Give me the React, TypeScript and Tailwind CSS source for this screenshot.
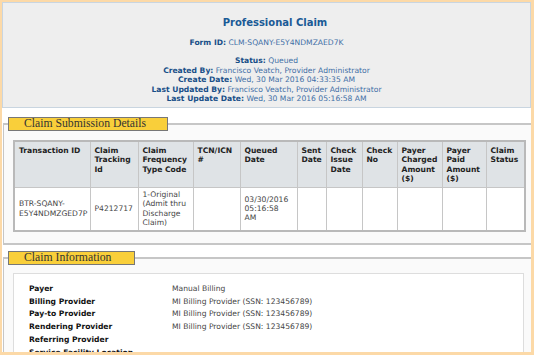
import React from 'react';

const headerLines: [string, string][] = [
  ['Status:', 'Queued'],
  ['Created By:', 'Francisco Veatch, Provider Administrator'],
  ['Create Date:', 'Wed, 30 Mar 2016 04:33:35 AM'],
  ['Last Updated By:', 'Francisco Veatch, Provider Administrator'],
  ['Last Update Date:', 'Wed, 30 Mar 2016 05:16:58 AM'],
];

const columns: { w: string; label: React.ReactNode }[] = [
  { w: 'w-[76px]', label: 'Transaction ID' },
  { w: 'w-[48px]', label: <>Claim<br />Tracking<br />Id</> },
  { w: 'w-[55px]', label: <>Claim<br />Frequency<br />Type Code</> },
  { w: 'w-[47px]', label: <>TCN/ICN<br />#</> },
  { w: 'w-[57px]', label: <>Queued<br />Date</> },
  { w: 'w-[29px]', label: <>Sent<br />Date</> },
  { w: 'w-[36px]', label: <>Check<br />Issue<br />Date</> },
  { w: 'w-[35px]', label: <>Check<br />No</> },
  { w: 'w-[45px]', label: <>Payer<br />Charged<br />Amount<br />($)</> },
  { w: 'w-[44px]', label: <>Payer<br />Paid<br />Amount<br />($)</> },
  { w: 'w-[39px]', label: <>Claim<br />Status</> },
];

const rowCells: React.ReactNode[] = [
  <>BTR-SQANY-<br />E5Y4NDMZGED7P</>,
  'P4212717',
  <>1-Original<br />(Admit thru<br />Discharge<br />Claim)</>,
  '',
  <>03/30/2016<br />05:16:58<br />AM</>,
  '',
  '',
  '',
  '',
  '',
  '',
];

const claimInfo: [string, string][] = [
  ['Payer', 'Manual Billing'],
  ['Billing Provider', 'MI Billing Provider (SSN: 123456789)'],
  ['Pay-to Provider', 'MI Billing Provider (SSN: 123456789)'],
  ['Rendering Provider', 'MI Billing Provider (SSN: 123456789)'],
  ['Referring Provider', ''],
  ['Service Facility Location', ''],
];

const Legend: React.FC<{ width: string; children: React.ReactNode }> = ({ width, children }) => (
  <legend
    className={`${width} ml-[4px] h-[14px] bg-[#f9cf3a] border border-[#777777] pl-[15px] font-['Liberation_Serif',serif] text-[11.7px] leading-[12px] text-[#333333] whitespace-nowrap`}
  >
    {children}
  </legend>
);

export default function App() {
  return (
    <div className="w-[534px] h-[355px] overflow-hidden bg-white border-t-2 border-l-2 border-r-[3px] border-b-[3px] border-[#fcd9a7] font-['DejaVu_Sans',Verdana,sans-serif] text-[7.6px]">
      {/* header */}
      <div className="h-[106px] bg-[#eeeeee] border border-[#c9d5e0] flex flex-col items-center pt-[13px]">
        <h1 className="pl-[17px] text-[10px] leading-[14px] font-bold text-[#1a5a96]">Professional Claim</h1>
        <p className="mt-[8px] leading-[9.5px] text-[#3f6fa6]">
          <b className="text-[#184f88]">Form ID:</b> CLM-SQANY-E5Y4NDMZAED7K
        </p>
        <div className="mt-[8.5px] leading-[9.5px] text-center text-[#3f6fa6]">
          {headerLines.map(([k, v]) => (
            <p key={k}>
              <b className="text-[#184f88]">{k}</b> {v}
            </p>
          ))}
        </div>
      </div>

      {/* claim submission details */}
      <fieldset className="mt-[9px] ml-[1px] border-t-2 border-l border-b-2 border-[#c6c6c6] bg-[#fafafa]">
        <Legend width="w-[160px]">Claim Submission Details</Legend>
        <div className="pt-[9px] pb-[11px] pl-[9px] pr-[7px]">
          <table className="w-full table-fixed border-collapse border-2 border-[#b9b9b9]">
            <colgroup>
              {columns.map((c, i) => (
                <col key={i} className={c.w} />
              ))}
            </colgroup>
            <thead>
              <tr className="h-[46px] bg-[#dfe3e6]">
                {columns.map((c, i) => (
                  <th
                    key={i}
                    className="border border-[#c6c6c6] align-top text-left font-bold leading-[9.3px] text-[#222222] pt-[4px] pl-[4px] pr-[1px]"
                  >
                    {c.label}
                  </th>
                ))}
              </tr>
            </thead>
            <tbody>
              <tr className="h-[44px] bg-white">
                {rowCells.map((c, i) => (
                  <td
                    key={i}
                    className="border border-[#c6c6c6] align-middle leading-[9.4px] text-[#444444] pl-[4px] pr-[1px] whitespace-nowrap"
                  >
                    {c}
                  </td>
                ))}
              </tr>
            </tbody>
          </table>
        </div>
      </fieldset>

      {/* claim information */}
      <fieldset className="mt-[6px] ml-[1px] border-t-2 border-l border-[#c6c6c6] bg-[#fafafa]">
        <Legend width="w-[127px]">Claim Information</Legend>
        <div className="pt-[8px] pl-[9px] pr-[7px]">
          <div className="bg-white border border-[#dddddd] pt-[9px] pl-[15px] pb-[10px]">
            <div className="grid grid-cols-[143px_1fr] leading-[12.7px]">
              {claimInfo.map(([k, v]) => (
                <React.Fragment key={k}>
                  <span className="font-bold text-[#111111]">{k}</span>
                  <span className="text-[#444444]">{v}</span>
                </React.Fragment>
              ))}
            </div>
          </div>
        </div>
      </fieldset>
    </div>
  );
}
